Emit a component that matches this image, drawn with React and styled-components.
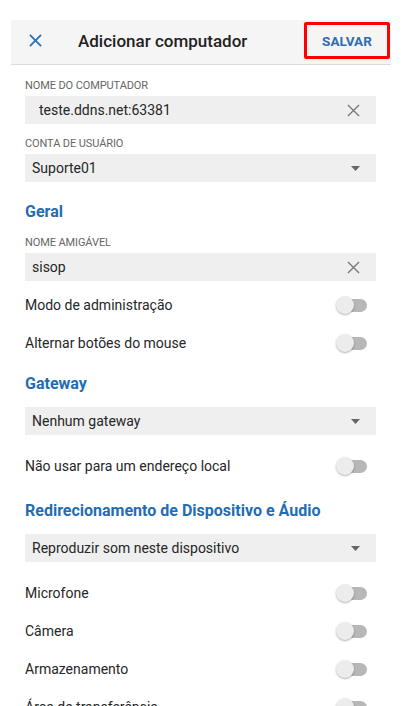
import React from "react";
import styled, { createGlobalStyle } from "styled-components";

const Global = createGlobalStyle`
  html, body { margin: 0; padding: 0; background: #fff; }
  body { font-family: Roboto, "Noto Sans", "Liberation Sans", sans-serif; color: #222; }
  * { box-sizing: border-box; }
`;

const Page = styled.div`
  width: 412px;
  height: 706px;
  overflow: hidden;
  padding: 20px 21px 0 11px;
`;

const Header = styled.header`
  height: 45px;
  background: #f5f5f5;
  border-bottom: 1px solid #dcdcdc;
  display: flex;
  align-items: center;
  padding-bottom: 3px;
`;

const IconButton = styled.button`
  width: 50px;
  height: 40px;
  border: 0;
  background: transparent;
  padding: 0 0 0 18px;
  display: flex;
  align-items: center;
  color: #2a72c0;
`;

const Title = styled.h1`
  flex: 1;
  margin: 0 0 0 17px;
  font-size: 17px;
  font-weight: 500;
  color: #222;
`;

const SaveButton = styled.button`
  width: 86px;
  height: 37px;
  margin-right: 1px;
  border: 3px solid #ff0000;
  border-radius: 2px;
  background: transparent;
  font-family: Roboto, "Liberation Sans", sans-serif;
  font-size: 13.5px;
  font-weight: 700;
  color: #2f6db0;
  letter-spacing: 0.1px;
  padding: 0;
`;

const Content = styled.main`
  padding: 0 15px 0 14px;
  display: flex;
  flex-direction: column;
`;

const Label = styled.div`
  margin-top: ${(p) => p.$mt}px;
  font-size: 11px;
  line-height: 14px;
  color: #666;
  text-transform: uppercase;
  letter-spacing: -0.1px;
`;

const Field = styled.div`
  margin-top: ${(p) => p.$mt ?? 3}px;
  height: 28px;
  background: #efefef;
  display: flex;
  align-items: center;
  padding: 0 16px 0 ${(p) => p.$pl ?? 7}px;
  font-size: 14px;
  color: #262626;
`;

const FieldText = styled.span`
  flex: 1;
  white-space: nowrap;
`;

const SectionTitle = styled.h2`
  margin: ${(p) => p.$mt}px 0 0;
  font-size: 16px;
  line-height: 20px;
  font-weight: 700;
  color: #1f6db5;
`;

const ToggleRow = styled.div`
  margin-top: ${(p) => p.$mt ?? 0}px;
  height: 38px;
  display: flex;
  align-items: center;
  justify-content: space-between;
  padding-right: 9px;
  font-size: 14px;
  color: #262626;
`;

const Switch = styled.span`
  position: relative;
  width: 31px;
  height: 18px;
  display: inline-block;
  &::before {
    content: "";
    position: absolute;
    left: 4px;
    right: 0;
    top: 2.5px;
    height: 13px;
    border-radius: 7px;
    background: #b7b7b7;
  }
  &::after {
    content: "";
    position: absolute;
    left: 0;
    top: 0;
    width: 18px;
    height: 18px;
    border-radius: 50%;
    background: #ececec;
    box-shadow: 0 1px 2px rgba(0, 0, 0, 0.3);
  }
`;

const CloseGlyph = ({ size = 13, stroke = "#777", width = 1.4 }) => (
  <svg width={size} height={size} viewBox="0 0 14 14" aria-hidden="true">
    <path d="M1 1L13 13M13 1L1 13" stroke={stroke} strokeWidth={width} fill="none" />
  </svg>
);

const Caret = () => (
  <svg width="9" height="5" viewBox="0 0 9 5" aria-hidden="true">
    <path d="M0 0H9L4.5 5Z" fill="#666" />
  </svg>
);

const Select = ({ value, mt }) => (
  <Field $mt={mt}>
    <FieldText>{value}</FieldText>
    <Caret />
  </Field>
);

const Toggle = ({ label, mt }) => (
  <ToggleRow $mt={mt}>
    <span>{label}</span>
    <Switch />
  </ToggleRow>
);

export default function App() {
  return (
    <>
      <Global />
      <Page>
        <Header>
          <IconButton aria-label="Fechar">
            <CloseGlyph size={13} stroke="#2a72c0" width={2} />
          </IconButton>
          <Title>Adicionar computador</Title>
          <SaveButton>SALVAR</SaveButton>
        </Header>
        <Content>
          <Label $mt={14}>Nome do computador</Label>
          <Field $pl={14}>
            <FieldText>teste.ddns.net:63381</FieldText>
            <CloseGlyph />
          </Field>
          <Label $mt={13}>Conta de usuário</Label>
          <Select value="Suporte01" mt={3} />

          <SectionTitle $mt={20}>Geral</SectionTitle>
          <Label $mt={14}>Nome amigável</Label>
          <Field>
            <FieldText>sisop</FieldText>
            <CloseGlyph />
          </Field>
          <Toggle label="Modo de administração" mt={5} />
          <Toggle label="Alternar botões do mouse" />

          <SectionTitle $mt={12}>Gateway</SectionTitle>
          <Select value="Nenhum gateway" mt={13} />
          <Toggle label="Não usar para um endereço local" mt={12} />

          <SectionTitle $mt={16}>Redirecionamento de Dispositivo e Áudio</SectionTitle>
          <Select value="Reproduzir som neste dispositivo" mt={13} />
          <Toggle label="Microfone" mt={12} />
          <Toggle label="Câmera" />
          <Toggle label="Armazenamento" />
          <Toggle label="Área de transferência" />
        </Content>
      </Page>
    </>
  );
}
